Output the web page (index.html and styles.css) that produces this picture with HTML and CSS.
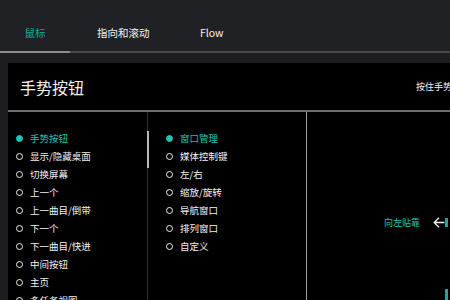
FILE: index.html
```html
<!DOCTYPE html>
<html lang="zh-CN">
<head>
    <meta charset="UTF-8">
    <meta name="viewport" content="width=device-width, initial-scale=1.0">
    <title>鼠标 - 手势按钮</title>
    <link rel="stylesheet" href="styles.css">
</head>
<body>
    <div class="tabs">
        <div class="tab active">鼠标</div>
        <div class="tab">指向和滚动</div>
        <div class="tab">Flow</div>
    </div>

    <div class="panel">
        <div class="panel-header">
            <h1>手势按钮</h1>
            <span class="hint">按住手势按钮并移动鼠标</span>
        </div>

        <div class="panel-body">
            <ul class="options">
                <li class="checked">手势按钮</li>
                <li>显示/隐藏桌面</li>
                <li>切换屏幕</li>
                <li>上一个</li>
                <li>上一曲目/倒带</li>
                <li>下一个</li>
                <li>下一曲目/快进</li>
                <li>中间按钮</li>
                <li>主页</li>
                <li>多任务视图</li>
            </ul>

            <div class="sub">
                <div class="scroll-thumb"></div>
                <ul class="options">
                    <li class="checked">窗口管理</li>
                    <li>媒体控制键</li>
                    <li>左/右</li>
                    <li>缩放/旋转</li>
                    <li>导航窗口</li>
                    <li>排列窗口</li>
                    <li>自定义</li>
                </ul>
            </div>

            <div class="preview">
                <div class="gesture">
                    <span class="gesture-label">向左贴靠</span>
                    <svg class="arrow" width="12" height="11" viewBox="0 0 12 11">
                        <path d="M11.5 5.5H1M6 0.8L1.2 5.5L6 10.2" fill="none" stroke="#f2f2f2" stroke-width="1.3"/>
                    </svg>
                </div>
                <div class="edge top"></div>
                <div class="edge bottom"></div>
            </div>
        </div>
    </div>
</body>
</html>
```

FILE: styles.css
```css
body {
    margin: 0;
    width: 450px;
    height: 300px;
    overflow: hidden;
    background: #1d1d1f;
    font-family: "Noto Sans CJK SC", "Noto Sans", sans-serif;
    color: #f2f2f2;
}
.tabs {
    display: flex;
    height: 51px;
    background: #202124;
    border-bottom: 2px solid #4a4a4c;
    position: relative;
}
.tab {
    font-size: 10.5px;
    padding-top: 24px;
    line-height: 17px;
    height: 27px;
}
.tab:nth-child(1) {
    width: 70px;
    text-align: center;
    margin-right: 27px;
}
.tab:nth-child(2) {
    width: 103px;
}
.tab.active {
    color: #18a898;
    position: relative;
}
.tab.active::after {
    content: "";
    position: absolute;
    left: 0;
    right: 0;
    bottom: -2px;
    height: 2px;
    background: #8c8c8c;
}
.panel {
    margin: 10px 0 0 8px;
    width: 520px;
    height: 240px;
    background: #000;
}
.panel-header {
    display: flex;
    align-items: center;
    height: 47px;
    padding-left: 12px;
    border-bottom: 2px solid #6e6e6e;
}
h1 {
    margin: 0;
    font-size: 16px;
    font-weight: normal;
    width: 396px;
}
.hint {
    font-size: 9px;
    white-space: nowrap;
}
.panel-body {
    display: flex;
    height: 190px;
}
.options {
    list-style: none;
    margin: 0;
    padding: 17px 0 0 8px;
    font-size: 9.5px;
}
.options li {
    display: flex;
    align-items: center;
    height: 18px;
    line-height: 18px;
}
.options li::before {
    content: "";
    width: 5px;
    height: 5px;
    border: 1.7px solid #f2f2f2;
    border-radius: 50%;
    margin-right: 7px;
}
.options li.checked {
    color: #1ec6b3;
}
.options li.checked::before {
    background: #1ec6b3;
    border-color: #1ec6b3;
}
.panel-body > .options {
    width: 131px;
}
.sub {
    width: 158px;
    border-left: 1px solid #2c2c2c;
    position: relative;
}
.sub .options {
    padding-left: 18px;
}
.scroll-thumb {
    position: absolute;
    left: -1px;
    top: 19px;
    width: 2px;
    height: 37px;
    background: #b8b8b8;
}
.preview {
    flex: 1;
    border-left: 1px solid #9a9a9a;
    position: relative;
}
.gesture {
    display: flex;
    align-items: center;
    padding: 104px 0 0 77px;
}
.gesture-label {
    color: #1ec6b3;
    font-size: 9px;
    margin-right: 13px;
}
.edge {
    position: absolute;
    left: 138px;
    width: 3px;
    background: #1aa897;
}
.edge.top {
    top: 106px;
    height: 9px;
}
.edge.bottom {
    top: 177px;
    height: 13px;
}
```
